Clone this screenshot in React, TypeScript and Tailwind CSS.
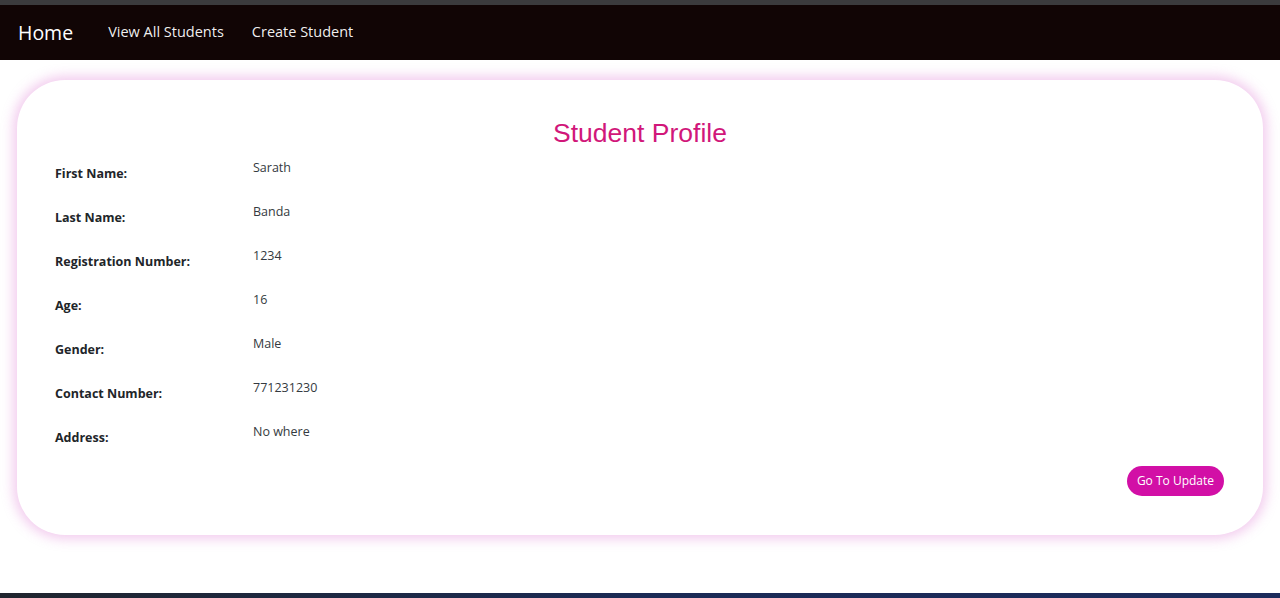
import React from "react";

const rows: [string, string][] = [
  ["First Name:", "Sarath"],
  ["Last Name:", "Banda"],
  ["Registration Number:", "1234"],
  ["Age:", "16"],
  ["Gender:", "Male"],
  ["Contact Number:", "771231230"],
  ["Address:", "No where"],
];

export default function App() {
  return (
    <div className="flex h-[598px] flex-col overflow-hidden bg-white font-['Open_Sans',sans-serif]">
      <div className="h-[5px] bg-[#3b3b3d]" />
      <nav className="flex h-[55px] items-center bg-[#110505] px-[18px] text-white">
        <a className="mr-[35px] text-[19.5px] leading-none">Home</a>
        <a className="mr-[28px] text-[14.5px] leading-none text-white/95">View All Students</a>
        <a className="text-[14.5px] leading-none text-white/95">Create Student</a>
      </nav>

      <main className="flex-1 px-[17px] pt-[20px]">
        <div className="h-[455px] rounded-[48px] bg-white px-[38px] pt-[38px] shadow-[0_0_12px_4px_rgba(221,120,210,0.38)]">
          <h1 className="text-center font-['Liberation_Sans',Arial,sans-serif] text-[26.5px] leading-[30px] text-[#d1177a]">
            Student Profile
          </h1>
          <div className="mt-[5px]">
            {rows.map(([label, value]) => (
              <div key={label} className="flex h-[44px]">
                <span className="w-[198px] pt-[12px] text-[12.5px] font-bold text-[#212529]">{label}</span>
                <span className="pt-[6px] text-[12.5px] text-[#343a40]">{value}</span>
              </div>
            ))}
          </div>
          <div className="mt-[5px] flex justify-end pr-[1px]">
            <button className="h-[30px] rounded-full bg-[#d20fa6] px-[10px] text-[12px] text-white">
              Go To Update
            </button>
          </div>
        </div>
      </main>

      <div className="h-[5px] bg-gradient-to-r from-[#20252e] via-[#1b2a55] to-[#1c2b5c]" />
    </div>
  );
}
